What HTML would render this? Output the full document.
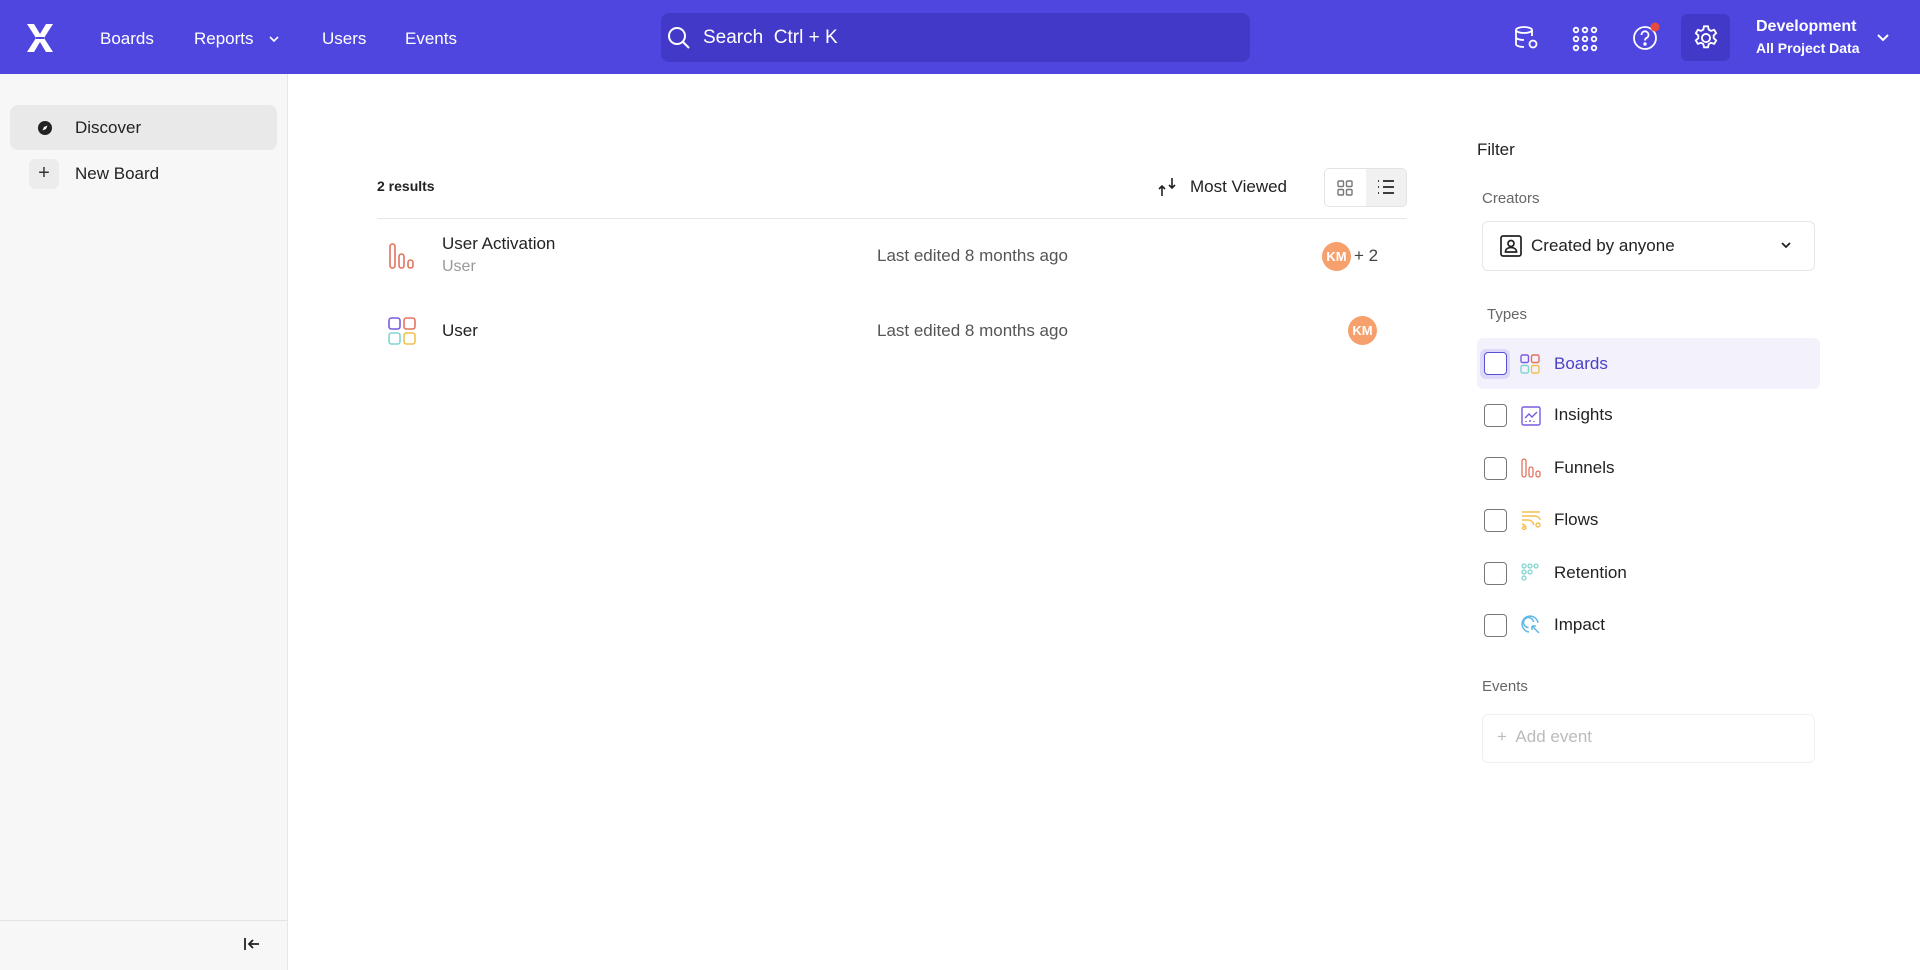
<!DOCTYPE html>
<html><head><meta charset="utf-8"><style>
*{box-sizing:border-box;margin:0;padding:0}
body{width:1920px;height:970px;overflow:hidden;font-family:"Liberation Sans",sans-serif;background:#fff;color:#222;position:relative}
.abs{position:absolute}
.hdr{position:absolute;left:0;top:0;width:1920px;height:74px;background:#4f46e0}
.nav{position:absolute;top:29px;color:#fff;font-size:17px}
.side{position:absolute;left:0;top:74px;width:288px;height:896px;background:#f7f7f7;border-right:1px solid #e6e6e6}
.t{position:absolute;white-space:nowrap}
.cb{position:absolute;left:1484px;width:23px;height:23px;border:1.5px solid #777;border-radius:4px;background:#fff}
.lbl{position:absolute;left:1554px;font-size:17px;color:#222}
</style></head><body>
<div class="hdr">
 <svg class="abs" style="left:24px;top:22px" width="32" height="32" viewBox="0 0 32 32"><path d="M3 2h7l6 10 6-10h7l-9 14 9 14h-7l-6-10-6 10H3l9-14z" fill="#fff"/><path d="M12 16h8" stroke="#4f46e0" stroke-width="2"/></svg>
 <div class="nav" style="left:100px">Boards</div>
 <div class="nav" style="left:194px">Reports</div>
 <svg class="abs" style="left:268px;top:35px" width="12" height="8" viewBox="0 0 12 8"><path d="M2 2l4 4 4-4" stroke="#fff" stroke-width="1.6" fill="none"/></svg>
 <div class="nav" style="left:322px">Users</div>
 <div class="nav" style="left:405px">Events</div>
 <div class="abs" style="left:661px;top:13px;width:589px;height:49px;background:#4339c8;border-radius:8px"></div>
 <svg class="abs" style="left:666px;top:25px" width="26" height="26" viewBox="0 0 26 26"><circle cx="11" cy="11" r="8" fill="none" stroke="#fff" stroke-width="2"/><path d="M17 17l6 6" stroke="#fff" stroke-width="2"/></svg>
 <div class="nav" style="left:703px;font-size:19px;top:27px">Search&nbsp; Ctrl + K</div>
 <svg class="abs" style="left:1512px;top:24px" width="28" height="28" viewBox="0 0 28 28" fill="none" stroke="#fff" stroke-width="1.8"><ellipse cx="12" cy="6" rx="8" ry="3"/><path d="M4 6v14c0 2 4 3 8 3M20 6v6M4 13c0 2 4 3 8 3"/><circle cx="21" cy="20" r="3.5"/></svg>
 <svg class="abs" style="left:1572px;top:26px" width="26" height="26" viewBox="0 0 26 26" fill="none" stroke="#fff" stroke-width="1.8"><circle cx="4" cy="4" r="2.3"/><circle cx="13" cy="4" r="2.3"/><circle cx="22" cy="4" r="2.3"/><circle cx="4" cy="13" r="2.3"/><circle cx="13" cy="13" r="2.3"/><circle cx="22" cy="13" r="2.3"/><circle cx="4" cy="22" r="2.3"/><circle cx="13" cy="22" r="2.3"/><circle cx="22" cy="22" r="2.3"/></svg>
 <svg class="abs" style="left:1630px;top:22px" width="34" height="30" viewBox="0 0 34 30" fill="none" stroke="#fff" stroke-width="1.8"><circle cx="15" cy="16" r="11"/><path d="M11.5 13a3.5 3.5 0 1 1 5 3c-1.2.6-1.5 1.3-1.5 2.5"/><circle cx="15" cy="22" r=".8" fill="#fff"/><circle cx="25" cy="5" r="4.5" fill="#e84a3c" stroke="none"/></svg>
 <div class="abs" style="left:1681px;top:14px;width:49px;height:47px;background:#4339c8;border-radius:6px"></div>
 <svg class="abs" style="left:1692px;top:24px" width="28" height="28" viewBox="0 0 24 24" fill="none" stroke="#fff" stroke-width="1.6"><circle cx="12" cy="12" r="3.5"/><path d="M10.3 2h3.4l.6 2.8 2 1.1 2.7-.9 1.7 2.9-2.1 1.9v2.4l2.1 1.9-1.7 2.9-2.7-.9-2 1.1-.6 2.8h-3.4l-.6-2.8-2-1.1-2.7.9-1.7-2.9 2.1-1.9V9.8L3.3 7.9 5 5l2.7.9 2-1.1z"/></svg>
 <div class="t" style="left:1756px;top:18px;color:#fff;font-weight:bold;font-size:16px">Development</div>
 <div class="t" style="left:1756px;top:40px;color:#fff;font-weight:bold;font-size:14px">All Project Data</div>
 <svg class="abs" style="left:1876px;top:33px" width="14" height="10" viewBox="0 0 14 10"><path d="M2 2l5 5 5-5" stroke="#fff" stroke-width="2" fill="none"/></svg>
</div>
<div class="side">
 <div class="abs" style="left:10px;top:31px;width:267px;height:45px;background:#e9e9e9;border-radius:8px"></div>
 <svg class="abs" style="left:37px;top:46px" width="16" height="16" viewBox="0 0 16 16"><circle cx="8" cy="8" r="7" fill="#222"/><path d="M10.5 5.5L9 9 5.5 10.5 7 7z" fill="#fff"/></svg>
 <div class="t" style="left:75px;top:44px;font-size:17px">Discover</div>
 <div class="abs" style="left:29px;top:85px;width:30px;height:30px;background:#ececec;border-radius:6px;text-align:center;line-height:28px;font-size:20px;color:#333">+</div>
 <div class="t" style="left:75px;top:90px;font-size:17px">New Board</div>
 <div class="abs" style="left:0;top:846px;width:287px;border-top:1px solid #e3e3e3"></div>
 <svg class="abs" style="left:243px;top:862px" width="18" height="16" viewBox="0 0 18 16" fill="none" stroke="#222" stroke-width="1.8"><path d="M2 2v12M16 8H6M10 4L6 8l4 4"/></svg>
</div>
<div class="t" style="left:377px;top:178px;font-size:14px;font-weight:bold;color:#222">2 results</div>
<svg class="abs" style="left:1156px;top:176px" width="22" height="22" viewBox="0 0 22 22" fill="none" stroke="#222" stroke-width="1.6"><path d="M6 20V10M3 13l3-3 3 3M16 2v10M13 9l3 3 3-3"/></svg>
<div class="t" style="left:1190px;top:177px;font-size:17px">Most Viewed</div>
<div class="abs" style="left:1324px;top:168px;width:83px;height:39px;border:1px solid #e3e3e3;border-radius:5px;overflow:hidden"><div class="abs" style="left:41px;top:0;width:42px;height:39px;background:#f1f1f1"></div></div>
<svg class="abs" style="left:1336px;top:179px" width="18" height="18" viewBox="0 0 18 18" fill="none" stroke="#777" stroke-width="1.4"><rect x="2" y="2" width="5.5" height="5.5" rx="1"/><rect x="10.5" y="2" width="5.5" height="5.5" rx="1"/><rect x="2" y="10.5" width="5.5" height="5.5" rx="1"/><rect x="10.5" y="10.5" width="5.5" height="5.5" rx="1"/></svg>
<svg class="abs" style="left:1376px;top:178px" width="20" height="18" viewBox="0 0 20 18" stroke="#222" stroke-width="1.8"><path d="M2 3h1M2 9h1M2 15h1M7 3h11M7 9h11M7 15h11"/></svg>
<div class="abs" style="left:377px;top:218px;width:1030px;border-top:1px solid #e6e6e6"></div>
<svg class="abs" style="left:388px;top:242px" width="28" height="28" viewBox="0 0 28 28" fill="none" stroke="#e2735f" stroke-width="1.6"><rect x="2" y="2" width="5" height="24" rx="2.5"/><rect x="11" y="12" width="5" height="14" rx="2.5"/><rect x="20" y="18" width="5" height="8" rx="2.5"/></svg>
<div class="t" style="left:442px;top:234px;font-size:17px">User Activation</div>
<div class="t" style="left:442px;top:258px;font-size:16px;color:#999">User</div>
<div class="t" style="left:877px;top:246px;font-size:17px;color:#555">Last edited 8 months ago</div>
<div class="abs" style="left:1322px;top:242px;width:29px;height:29px;border-radius:50%;background:#f5a06d;color:#fff;font-size:13px;font-weight:bold;text-align:center;line-height:29px">KM</div>
<div class="t" style="left:1354px;top:246px;font-size:17px;color:#444">+ 2</div>
<svg class="abs" style="left:388px;top:317px" width="28" height="28" viewBox="0 0 28 28" fill="none" stroke-width="1.6"><rect x="1" y="1" width="11" height="11" rx="2.5" stroke="#7a5be0"/><rect x="16" y="1" width="11" height="11" rx="2.5" stroke="#e2735f"/><rect x="1" y="16" width="11" height="11" rx="2.5" stroke="#7fd6d0"/><rect x="16" y="16" width="11" height="11" rx="2.5" stroke="#f2bf4e"/></svg>
<div class="t" style="left:442px;top:321px;font-size:17px">User</div>
<div class="t" style="left:877px;top:321px;font-size:17px;color:#555">Last edited 8 months ago</div>
<div class="abs" style="left:1348px;top:316px;width:29px;height:29px;border-radius:50%;background:#f5a06d;color:#fff;font-size:13px;font-weight:bold;text-align:center;line-height:29px">KM</div>

<div class="t" style="left:1477px;top:140px;font-size:17px">Filter</div>
<div class="t" style="left:1482px;top:190px;font-size:15px;color:#666">Creators</div>
<div class="abs" style="left:1482px;top:221px;width:333px;height:50px;border:1px solid #e6e6e6;border-radius:6px"></div>
<svg class="abs" style="left:1500px;top:235px" width="22" height="22" viewBox="0 0 22 22" fill="none" stroke="#222" stroke-width="1.7"><rect x="1" y="1" width="20" height="20" rx="2"/><circle cx="11" cy="8.5" r="3"/><path d="M5.5 17c0-3 2.5-4.5 5.5-4.5s5.5 1.5 5.5 4.5z"/></svg>
<div class="t" style="left:1531px;top:236px;font-size:17px">Created by anyone</div>
<svg class="abs" style="left:1780px;top:241px" width="12" height="8" viewBox="0 0 12 8"><path d="M2 2l4 4 4-4" stroke="#222" stroke-width="1.8" fill="none"/></svg>
<div class="t" style="left:1487px;top:306px;font-size:15px;color:#666">Types</div>
<div class="abs" style="left:1477px;top:338px;width:343px;height:51px;background:#f3f2fc;border-radius:6px"></div>
<div class="abs" style="left:1480px;top:349px;width:30px;height:30px;background:#dcd8fa;border-radius:6px"></div>
<div class="cb" style="top:352px;border-color:#5a4fcf"></div>
<svg class="abs" style="left:1520px;top:354px" width="20" height="20" viewBox="0 0 20 20" fill="none" stroke-width="1.4"><rect x="1" y="1" width="7.5" height="7.5" rx="1.5" stroke="#7a5be0"/><rect x="11.5" y="1" width="7.5" height="7.5" rx="1.5" stroke="#e2735f"/><rect x="1" y="11.5" width="7.5" height="7.5" rx="1.5" stroke="#7fd6d0"/><rect x="11.5" y="11.5" width="7.5" height="7.5" rx="1.5" stroke="#f2bf4e"/></svg>
<div class="lbl" style="top:354px;color:#4a3fc6">Boards</div>
<div class="cb" style="top:404px"></div>
<svg class="abs" style="left:1521px;top:406px" width="20" height="20" viewBox="0 0 20 20" fill="none" stroke="#7a5be0" stroke-width="1.4"><rect x="1" y="1" width="18" height="18" rx="1.5"/><path d="M4 12l4-4 3 3 5-5"/><path d="M5 16v-1M9 16v-2M13 16v-1" /></svg>
<div class="lbl" style="top:405px">Insights</div>
<div class="cb" style="top:457px"></div>
<svg class="abs" style="left:1521px;top:458px" width="20" height="20" viewBox="0 0 20 20" fill="none" stroke="#e2735f" stroke-width="1.3"><rect x="1" y="1" width="4" height="18" rx="2"/><rect x="8" y="9" width="4" height="10" rx="2"/><rect x="15" y="13" width="4" height="6" rx="2"/></svg>
<div class="lbl" style="top:458px">Funnels</div>
<div class="cb" style="top:509px"></div>
<svg class="abs" style="left:1521px;top:510px" width="20" height="20" viewBox="0 0 20 20" fill="none" stroke="#f2bf4e" stroke-width="1.4"><path d="M1 2h18M1 6h12c4 0 6 2 6 4M1 10h6c3 0 5 2 6 5M1 14c2 0 4 2 4 5"/><circle cx="17" cy="15" r="2"/><circle cx="3" cy="18" r="1.5"/></svg>
<div class="lbl" style="top:510px">Flows</div>
<div class="cb" style="top:562px"></div>
<svg class="abs" style="left:1521px;top:563px" width="20" height="20" viewBox="0 0 20 20" fill="none" stroke="#7fd6d0" stroke-width="1.3"><circle cx="3" cy="3" r="2"/><circle cx="9" cy="3" r="2"/><circle cx="15" cy="3" r="2"/><circle cx="3" cy="9" r="2"/><circle cx="9" cy="9" r="2"/><circle cx="3" cy="15" r="2"/></svg>
<div class="lbl" style="top:563px">Retention</div>
<div class="cb" style="top:614px"></div>
<svg class="abs" style="left:1521px;top:615px" width="20" height="20" viewBox="0 0 20 20" fill="none" stroke="#5fb8e6" stroke-width="1.5"><path d="M17 8A8 8 0 1 0 8 17"/><path d="M12.5 7a5 5 0 1 0-5 5.5"/><path d="M11 11l7 7M11 11h4M11 11v4"/></svg>
<div class="lbl" style="top:615px">Impact</div>
<div class="t" style="left:1482px;top:678px;font-size:15px;color:#666">Events</div>
<div class="abs" style="left:1482px;top:714px;width:333px;height:49px;border:1px solid #f0f0f0;border-radius:6px"></div>
<div class="t" style="left:1497px;top:727px;font-size:17px;color:#bbb">+&nbsp; Add event</div>
</body></html>
